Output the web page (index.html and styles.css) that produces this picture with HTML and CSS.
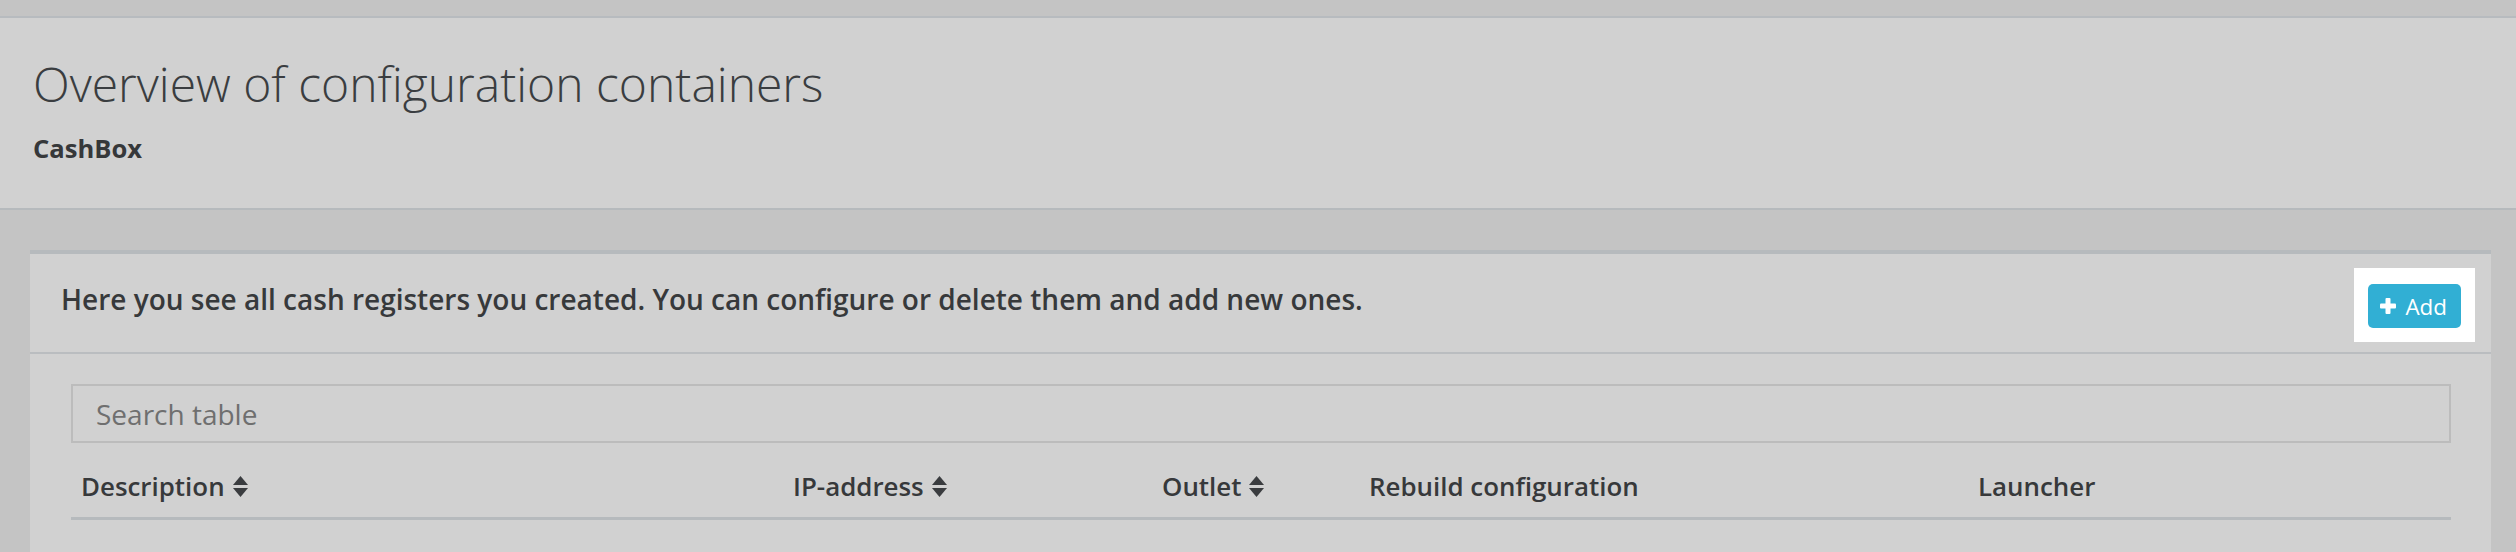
FILE: index.html
```html
<!DOCTYPE html>
<html lang="en">
<head>
<meta charset="utf-8">
<title>Overview of configuration containers</title>
<link rel="stylesheet" href="styles.css">
</head>
<body>
<div class="topbar"></div>
<header class="page-header">
  <h1 class="page-title">Overview of configuration containers</h1>
  <div class="page-subtitle">CashBox</div>
</header>
<main class="content">
  <section class="panel">
    <div class="panel-head">
      <p class="panel-text">Here you see all cash registers you created. You can configure or delete them and add new ones.</p>
      <div class="highlight">
        <button class="btn-add" type="button">
          <svg class="plus" width="16" height="16" viewBox="0 0 16 16" aria-hidden="true">
            <rect x="5.5" y="0" width="5" height="16" rx="1" fill="#fff"/>
            <rect x="0" y="5.5" width="16" height="5" rx="1" fill="#fff"/>
          </svg>
          <span>Add</span>
        </button>
      </div>
    </div>
    <div class="panel-body">
      <input class="search" type="text" placeholder="Search table">
      <div class="table-head">
        <div class="th">Description <svg class="sort" width="15" height="21" viewBox="0 0 15 21" aria-hidden="true"><path d="M7.5 0 L15 9 L0 9 Z" fill="currentColor"/><path d="M0 12 L15 12 L7.5 21 Z" fill="currentColor"/></svg></div>
        <div class="th">IP-address <svg class="sort" width="15" height="21" viewBox="0 0 15 21" aria-hidden="true"><path d="M7.5 0 L15 9 L0 9 Z" fill="currentColor"/><path d="M0 12 L15 12 L7.5 21 Z" fill="currentColor"/></svg></div>
        <div class="th">Outlet <svg class="sort" width="15" height="21" viewBox="0 0 15 21" aria-hidden="true"><path d="M7.5 0 L15 9 L0 9 Z" fill="currentColor"/><path d="M0 12 L15 12 L7.5 21 Z" fill="currentColor"/></svg></div>
        <div class="th">Rebuild configuration</div>
        <div class="th">Launcher</div>
      </div>
    </div>
  </section>
</main>
</body>
</html>
```

FILE: styles.css
```css
html, body {
  margin: 0;
  padding: 0;
}

body {
  background: #c4c4c4;
  font-family: "Open Sans", "Liberation Sans", sans-serif;
  color: #393b3e;
  height: 552px;
  overflow: hidden;
}

.topbar {
  height: 16px;
  border-bottom: 2px solid #b7bbbf;
}

.page-header {
  background: #d1d1d1;
  border-bottom: 2px solid #b6babd;
  padding: 39px 33px 0 33px;
  height: 151px;
}

.page-title {
  margin: 0;
  font-weight: 300;
  font-size: 48px;
  line-height: 54px;
  color: #3a3d40;
}

.page-subtitle {
  margin-top: 20px;
  font-weight: 700;
  font-size: 25.6px;
  line-height: 36px;
  color: #36383a;
}

.content {
  padding: 40px 25px 0 30px;
}

.panel {
  background: #d1d1d1;
  border-top: 4px solid #b6babd;
  height: 320px;
}

.panel-head {
  display: flex;
  justify-content: space-between;
  align-items: flex-start;
  padding: 14px 16px 10px 31px;
  border-bottom: 2px solid #babdc0;
}

.panel-text {
  margin: 13px 0 0 0;
  font-weight: 600;
  font-size: 28px;
  line-height: 36px;
  color: #37393b;
}

.highlight {
  background: #ffffff;
  padding: 16px 14px 14px 14px;
}

.btn-add {
  display: flex;
  align-items: center;
  gap: 9px;
  height: 44px;
  padding: 0 14px 0 12px;
  border: none;
  border-radius: 5px;
  background: #31afd4;
  color: #ffffff;
  font-family: "Open Sans", "Liberation Sans", sans-serif;
  font-size: 22.4px;
  font-weight: 400;
}

.plus {
  display: block;
}

.panel-body {
  padding: 30px 40px 0 41px;
}

.search {
  display: block;
  box-sizing: border-box;
  width: 100%;
  height: 59px;
  margin: 0;
  padding: 0 23px;
  border: 2px solid #bcbcbc;
  background: transparent;
  font-family: "Open Sans", "Liberation Sans", sans-serif;
  font-size: 28px;
  color: #555;
  outline: none;
}

.search::placeholder {
  color: #6f6f6f;
}

.table-head {
  display: grid;
  grid-template-columns: 712px 369px 207px 609px 1fr;
  border-bottom: 3px solid #b6babd;
}

.th {
  display: flex;
  align-items: center;
  gap: 8px;
  padding: 25px 10px 13px 10px;
  font-weight: 600;
  font-size: 25.9px;
  line-height: 36px;
  color: #37393b;
}

.sort {
  display: block;
  color: #3a3c3f;
}
```
